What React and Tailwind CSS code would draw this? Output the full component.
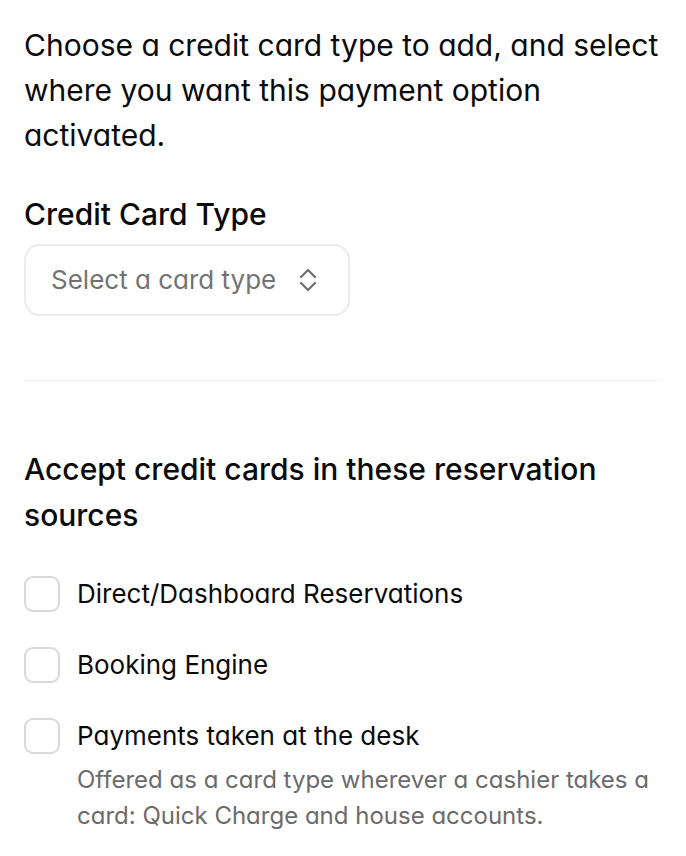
import React from "react";

const bodyFont = { fontFamily: "Inter, 'Noto Sans', sans-serif" };

function Checkbox() {
  return (
    <span className="block w-9 h-9 shrink-0 rounded-[9px] border-2 border-[#d9d9d9] bg-white" />
  );
}

export default function App() {
  return (
    <div
      className="w-[686px] min-h-[856px] bg-white px-6 pt-[23px] text-[#0a0a0a] [font-feature-settings:'cv11']"
      style={bodyFont}
    >
      <p className="text-[30px] leading-[45px]">
        Choose a credit card type to add, and select where you want this payment option activated.
      </p>

      <h2 className="mt-[35px] text-[30px] leading-[42px] font-medium [font-feature-settings:normal]">
        Credit Card Type
      </h2>
      <button className="mt-[9px] flex items-center w-[326px] h-[72px] rounded-[16px] border-2 border-[#ebebeb] bg-white pl-[25px] pr-[30px]">
        <span className="text-[26px] text-[#737373] leading-none">Select a card type</span>
        <svg
          className="ml-auto"
          width="20"
          height="26"
          viewBox="0 0 20 26"
          fill="none"
          stroke="#6f6f6f"
          strokeWidth="2.2"
          strokeLinecap="round"
          strokeLinejoin="round"
        >
          <path d="M3 10 L10 3 L17 10" />
          <path d="M3 16 L10 23 L17 16" />
        </svg>
      </button>

      <div className="mt-[64px] h-px bg-[#f2f2f2]" />

      <h2 className="mt-[65px] text-[30px] leading-[46px] font-medium [font-feature-settings:normal]">
        Accept credit cards in these reservation sources
      </h2>

      <div className="mt-[38px] flex flex-col gap-[35px]">
        <label className="flex items-center gap-[17px]">
          <Checkbox />
          <span className="text-[26px] leading-[36px]">Direct/Dashboard Reservations</span>
        </label>
        <label className="flex items-center gap-[17px]">
          <Checkbox />
          <span className="text-[26px] leading-[36px]">Booking Engine</span>
        </label>
        <div className="flex items-start gap-[17px]">
          <Checkbox />
          <div>
            <div className="text-[26px] leading-[36px]">Payments taken at the desk</div>
            <div className="mt-[8px] text-[24px] leading-[36px] text-[#6b6b6b]">
              Offered as a card type wherever a cashier takes a card: Quick Charge and house accounts.
            </div>
          </div>
        </div>
      </div>
    </div>
  );
}
